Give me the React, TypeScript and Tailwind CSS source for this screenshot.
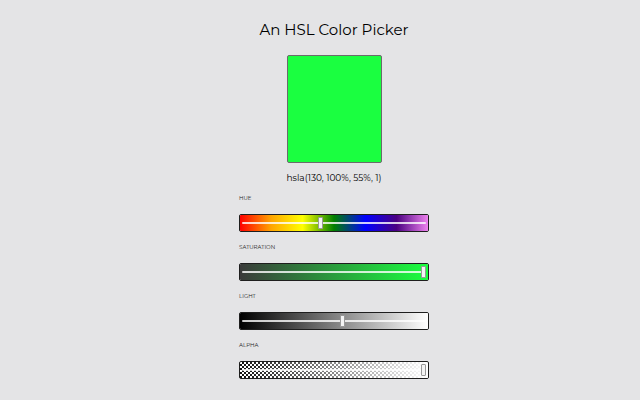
import React from 'react';

const font = { fontFamily: '"Montserrat", Inter, "Noto Sans", sans-serif' };

interface SliderProps {
  label: string;
  value: number; // 0..1 thumb position
  bg: string;
  checker?: boolean;
}

const Slider: React.FC<SliderProps> = ({ label, value, bg, checker }) => (
  <div className="flex flex-col">
    <span className="text-[5.5px] leading-[8px] uppercase text-[#222]">{label}</span>
    <div
      className={`mt-3 h-[18px] w-[190px] rounded-[2px] border border-[#1e1e1e] overflow-hidden ${
        checker ? 'bg-[repeating-conic-gradient(#111_0_25%,#fff_0_50%)] bg-[length:4px_4px]' : ''
      }`}
    >
      <div className={`relative h-full w-full ${bg}`}>
        {/* track */}
        <div className="absolute left-[2px] right-[2px] top-[7px] h-[2px] rounded-full bg-white/80" />
        {/* thumb */}
        <div
          className="absolute top-[2px] h-[12px] w-[5px] rounded-[1px] border border-[#999] bg-[#f4f4f4]"
          style={{ left: `calc(${value * 100}% - ${value * 7}px)` }}
        />
      </div>
    </div>
  </div>
);

export default function App() {
  return (
    <div className="min-h-[400px] w-full bg-[#e4e4e6] pl-7 text-[#000]" style={font}>
      <div className="flex flex-col items-center pt-[18px]">
        <h1 className="text-[15px] leading-[24px] font-normal">An HSL Color Picker</h1>
        <div className="mt-[13px] h-[108px] w-[95px] rounded-[2px] border border-[#6b6b6b] bg-[hsl(130,100%,55%)]" />
        <p className="mt-[9px] text-[9px] leading-[12px]">hsla(130, 100%, 55%, 1)</p>
        <div className="mt-[10px] flex flex-col gap-[11px]">
          <Slider
            label="Hue"
            value={0.43}
            bg="bg-[linear-gradient(to_right,red,orange,yellow,green,blue,indigo,violet)]"
          />
          <Slider
            label="Saturation"
            value={1}
            bg="bg-[linear-gradient(to_right,#3a3a3a,#1aff3f)]"
          />
          <Slider label="Light" value={0.55} bg="bg-[linear-gradient(to_right,#000,#fff)]" />
          <Slider
            label="Alpha"
            value={1}
            bg="bg-[linear-gradient(to_right,transparent,#fff)]"
            checker
          />
        </div>
      </div>
    </div>
  );
}
